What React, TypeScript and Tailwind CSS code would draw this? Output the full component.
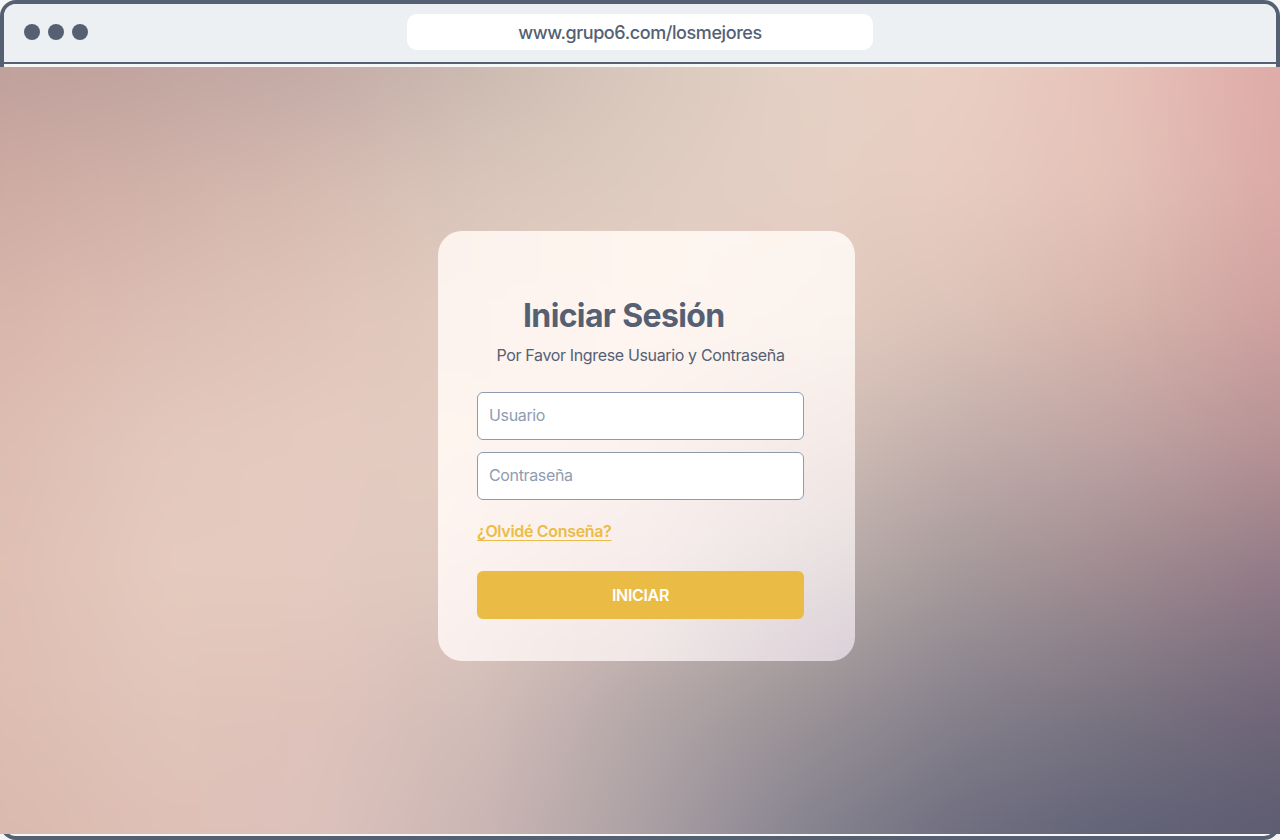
import { useId } from "react";

type MeshProps = {
  xs: number[];
  ys: number[];
  rows: string[][];
  className: string;
};

/** Smooth colour mesh: every row is a horizontal gradient that fades into the next one. */
function Mesh({ xs, ys, rows, className }: MeshProps) {
  const id = useId().replace(/[^a-zA-Z0-9]/g, "");
  const x0 = xs[0];
  const y0 = ys[0];
  const width = xs[xs.length - 1] - x0;
  const height = ys[ys.length - 1] - y0;
  return (
    <svg className={className} viewBox={`0 0 ${width} ${height}`} preserveAspectRatio="none" aria-hidden="true">
      <defs>
        {rows.map((row, r) => (
          <linearGradient key={r} id={`${id}c${r}`} gradientUnits="userSpaceOnUse" x1="0" x2={width} y1="0" y2="0">
            {row.map((color, c) => (
              <stop key={c} offset={(xs[c] - x0) / width} stopColor={color} />
            ))}
          </linearGradient>
        ))}
        {rows.slice(1).map((_, i) => (
          <linearGradient
            key={i}
            id={`${id}f${i + 1}`}
            gradientUnits="userSpaceOnUse"
            x1="0"
            x2="0"
            y1={ys[i] - y0}
            y2={ys[i + 1] - y0}
          >
            <stop offset="0" stopColor="#fff" stopOpacity="0" />
            <stop offset="1" stopColor="#fff" stopOpacity="1" />
          </linearGradient>
        ))}
        {rows.slice(1).map((_, i) => (
          <mask
            key={i}
            id={`${id}m${i + 1}`}
            maskUnits="userSpaceOnUse"
            x={-80}
            y={-80}
            width={width + 160}
            height={height + 160}
          >
            <rect x={-80} y={-80} width={width + 160} height={height + 160} fill={`url(#${id}f${i + 1})`} />
          </mask>
        ))}
        <filter id={`${id}b`} filterUnits="userSpaceOnUse" x={-80} y={-80} width={width + 160} height={height + 160} colorInterpolationFilters="sRGB">
          <feGaussianBlur stdDeviation="24" />
        </filter>
      </defs>
      <g filter={`url(#${id}b)`}>
        {rows.map((_, r) => (
          <rect
            key={r}
            x={-80}
            y={-80}
            width={width + 160}
            height={height + 160}
            fill={`url(#${id}c${r})`}
            mask={r > 0 ? `url(#${id}m${r})` : undefined}
          />
        ))}
      </g>
    </svg>
  );
}

const backdrop = {
  xs: [0, 160, 320, 480, 640, 800, 960, 1120, 1280],
  ys: [0, 128, 256, 384, 512, 640, 767],
  rows: [
    ["#c0a09b", "#c1a5a0", "#c4aba7", "#cbbab1", "#d9c8bd", "#e5d1c6", "#eacfc4", "#e7c2b9", "#dfaba8"],
    ["#ceaca4", "#d2b3aa", "#d7bcb2", "#dac6bb", "#dfccc1", "#e5cfc4", "#e7cbc0", "#e3c1b7", "#daaaa7"],
    ["#dab6ab", "#ddbfb4", "#e0c5ba", "#e3ccc1", "#e3cdc2", "#e3cbc0", "#dbc2b8", "#d5b3ab", "#cea09f"],
    ["#ddbdb1", "#e3c8bd", "#e5cbc0", "#e3ccc2", "#dec9bf", "#d1bfb7", "#c1adaa", "#bca1a1", "#b49093"],
    ["#dfbfb3", "#e5cabe", "#e4cac0", "#dec8bf", "#cebbb5", "#b9adaa", "#a4989a", "#9d898f", "#907986"],
    ["#ddbdb1", "#e1c5ba", "#dfc3bb", "#d2bdb8", "#b5a8a9", "#9c9497", "#86818c", "#7a7481", "#706679"],
    ["#d9b9ad", "#debfb5", "#dcc1bc", "#cab5b3", "#aba0a4", "#868390", "#6e6d7f", "#616277", "#5d5c70"],
  ],
};

const cardTint = {
  xs: [0, 208, 417],
  ys: [0, 108, 215, 322, 430],
  rows: [
    ["#fcf2ed", "#fef5ef", "#fcf4ee"],
    ["#fdf3ee", "#fef5f0", "#faf2ed"],
    ["#fff5ef", "#fbf2ef", "#f3e9e7"],
    ["#fdf4f0", "#f6edec", "#e8e0e0"],
    ["#f9efec", "#efe6e5", "#d9ced7"],
  ],
};

const inputClass =
  "block h-12 w-full rounded-md border border-[#8d9bb1] bg-white px-[11px] pb-0.5 text-base tracking-[-0.022em] text-[#556073] outline-none placeholder:text-[#8f9cb2] placeholder:opacity-100";

export default function App() {
  return (
    <div className="h-[840px] w-[1280px] overflow-hidden bg-[#f5f5f5] font-['Inter',sans-serif] text-[#556073]">
      <div className="flex h-full flex-col rounded-2xl border-4 border-[#556073] bg-[#f6f8f8]">
        <header className="flex h-15 shrink-0 items-start rounded-t-xl border-b-2 border-[#556073] bg-[#ecf0f3] px-5">
          <div className="flex flex-1 gap-2 pt-5">
            <span className="size-4 rounded-full bg-[#556073]" />
            <span className="size-4 rounded-full bg-[#556073]" />
            <span className="size-4 rounded-full bg-[#556073]" />
          </div>
          <div className="mt-2.5 flex h-9 w-[466px] items-center justify-center rounded-[10px] bg-white pt-0.5 text-lg font-medium tracking-[-0.023em]">
            <span>www.grupo6.com/losmejores</span>
          </div>
          <div className="flex-1" />
        </header>
        <main className="relative -mx-1 mt-[3px] flex h-[767px] shrink-0 flex-col items-start pt-[164px] pl-[438px]">
          <Mesh {...backdrop} className="absolute inset-0 h-full w-full" />
          <section className="relative h-[430px] w-[417px] overflow-hidden rounded-3xl">
            <Mesh {...cardTint} className="absolute inset-0 h-full w-full" />
            <form className="relative flex flex-col pt-[65px] pr-[51px] pl-[39px]" onSubmit={(e) => e.preventDefault()}>
              <h1 className="pl-[46px] text-[32px] leading-10 font-bold tracking-[-0.02em] whitespace-nowrap">
                <span>Iniciar Sesión</span>
              </h1>
              <p className="mt-[7px] text-center text-base leading-6 tracking-[-0.022em] whitespace-nowrap">
                <span>Por Favor Ingrese Usuario y Contraseña</span>
              </p>
              <div className="mt-[25px] flex flex-col gap-3">
                <input className={inputClass} type="text" placeholder="Usuario" />
                <input className={inputClass} type="password" placeholder="Contraseña" />
              </div>
              <a
                href="#"
                className="mt-[19px] self-start text-base leading-6 font-semibold tracking-[-0.02em] text-[#ebbc46] underline decoration-1 underline-offset-[3px]"
              >
                ¿Olvidé Conseña?
              </a>
              <button
                type="submit"
                className="mt-7 h-12 w-full rounded-md bg-[#eabc46] text-base font-semibold tracking-[-0.02em] text-white"
              >
                <span>INICIAR</span>
              </button>
            </form>
          </section>
        </main>
      </div>
    </div>
  );
}
